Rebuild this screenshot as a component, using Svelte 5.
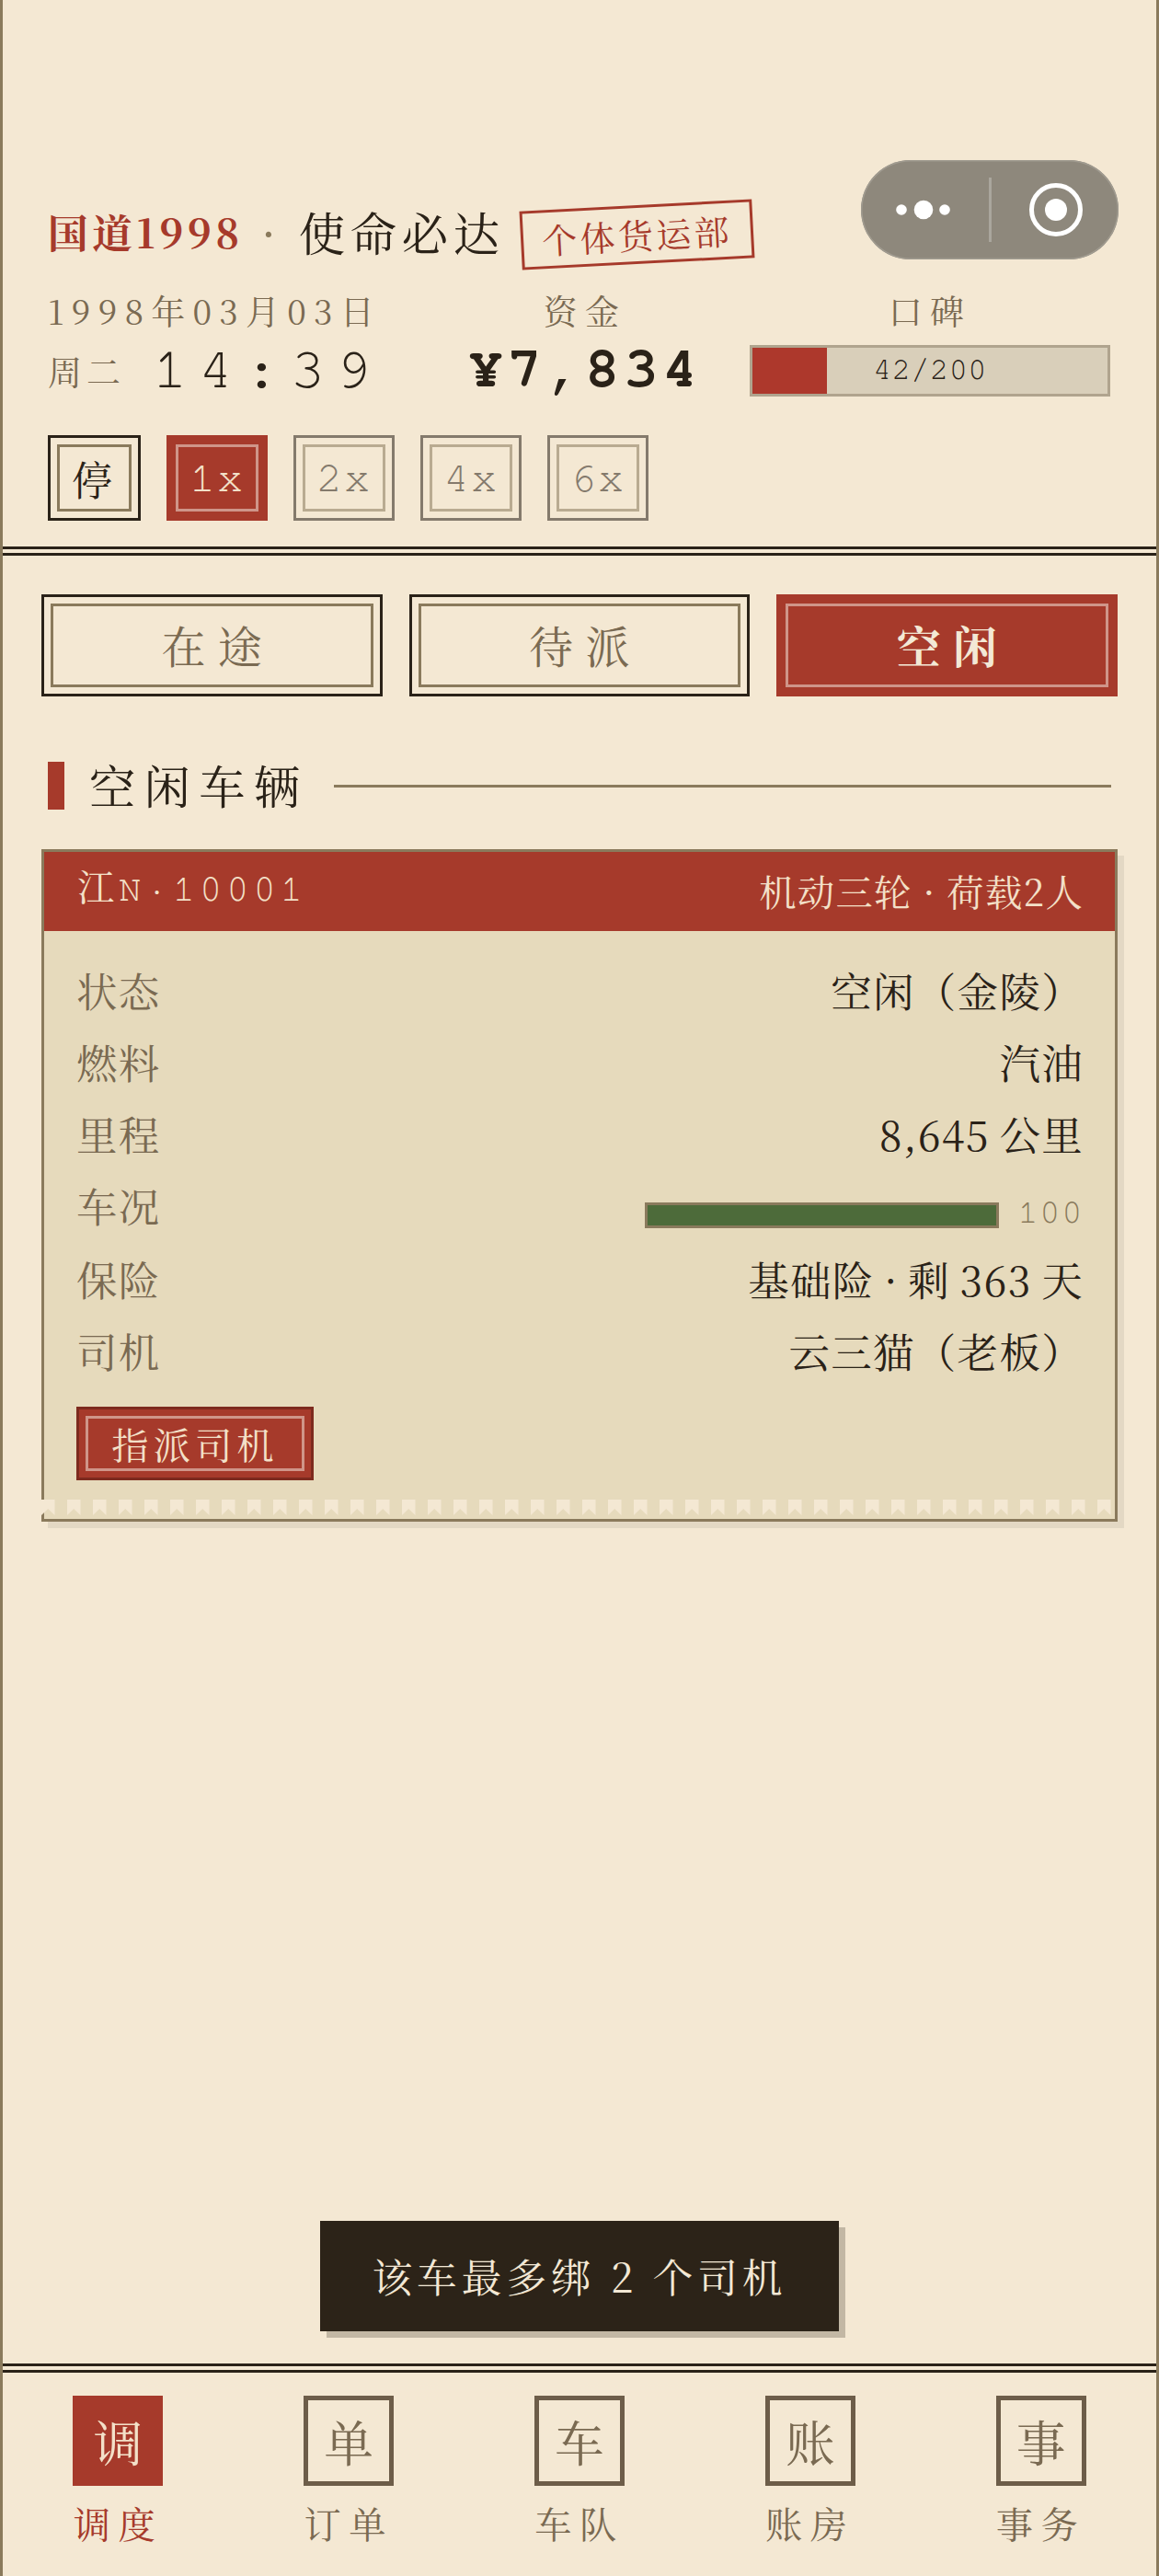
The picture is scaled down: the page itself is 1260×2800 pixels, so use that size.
<script>
  const speeds = [
    { label: '1x', on: true },
    { label: '2x' },
    { label: '4x' },
    { label: '6x' }
  ];
  const tabs = [
    { key: 'transit', label: '在途' },
    { key: 'pending', label: '待派' },
    { key: 'idle', label: '空闲', on: true }
  ];
  const rows = [
    { k: '状态', v: '空闲（金陵）' },
    { k: '燃料', v: '汽油' },
    { k: '里程', v: '8,645 公里' },
    { k: '车况', bar: 100 },
    { k: '保险', v: '基础险 · 剩 363 天' },
    { k: '司机', v: '云三猫（老板）' }
  ];
  const nav = [
    { icon: '调', label: '调度', on: true },
    { icon: '单', label: '订单' },
    { icon: '车', label: '车队' },
    { icon: '账', label: '账房' },
    { icon: '事', label: '事务' }
  ];
</script>

<div class="page">
  <header class="head">
    <div class="title">
      <span class="brand">国道1998</span>
      <span class="dot">·</span>
      <span class="slogan">使命必达</span>
      <span class="stamp">个体货运部</span>
    </div>
    <div class="stats">
      <div class="clock">
        <div class="date">1998年03月03日</div>
        <div class="timeline"><span class="week">周二</span><span class="time">14:39</span></div>
      </div>
      <div class="funds">
        <div class="cap">资金</div>
        <div class="money">¥7,834</div>
      </div>
      <div class="rep">
        <div class="cap">口碑</div>
        <div class="repbar">
          <div class="repfill" style="width:21%"></div>
          <span class="reptext">42/200</span>
        </div>
      </div>
    </div>
    <div class="speeds">
      <button class="speed pause"><span class="inner">停</span></button>
      {#each speeds as s}
        <button class="speed rate" class:on={s.on} class:off={!s.on}><span class="inner mono">{s.label}</span></button>
      {/each}
    </div>
  </header>

  <main class="main">
    <div class="tabs">
      {#each tabs as t}
        <button class="tab" class:on={t.on}><span class="tabinner">{t.label}</span></button>
      {/each}
    </div>

    <div class="section">
      <i class="mark"></i>
      <span class="sectitle">空闲车辆</span>
      <i class="rule"></i>
    </div>

    <article class="card">
      <div class="cardhead">
        <span class="plate">江N·10001</span>
        <span class="model">机动三轮 · 荷载2人</span>
      </div>
      <div class="cardbody">
        {#each rows as r}
          <div class="row" class:barrow={r.bar}>
            <span class="key">{r.k}</span>
            {#if r.bar}
              <span class="cond">
                <span class="condbar"><span class="condfill" style="width:{r.bar}%"></span></span>
                <span class="condnum">{r.bar}</span>
              </span>
            {:else}
              <span class="val">{r.v}</span>
            {/if}
          </div>
        {/each}
        <button class="assign"><span class="assigninner">指派司机</span></button>
      </div>
      <svg class="teeth" aria-hidden="true">
        <defs>
          <pattern id="flag" width="28" height="17" patternUnits="userSpaceOnUse">
            <path d="M0 0H14.5V17L7.2 10L0 17Z" fill="#f4e8d3" />
          </pattern>
        </defs>
        <rect width="100%" height="17" fill="url(#flag)" />
      </svg>
    </article>
  </main>

  <div class="toastwrap"><div class="toast">该车最多绑 2 个司机</div></div>

  <nav class="nav">
    {#each nav as n}
      <div class="navitem" class:on={n.on}>
        <span class="navicon">{n.icon}</span>
        <span class="navlabel">{n.label}</span>
      </div>
    {/each}
  </nav>

  <div class="capsule" aria-hidden="true">
    <svg width="280" height="108" viewBox="0 0 280 108">
      <circle cx="44" cy="54" r="5.8" fill="#fff" />
      <circle cx="68" cy="54" r="10.3" fill="#fff" />
      <circle cx="91" cy="54" r="5.8" fill="#fff" />
      <rect x="139" y="19" width="3" height="70" fill="#fff" opacity="0.25" />
      <circle cx="212" cy="54" r="26.5" fill="none" stroke="#fff" stroke-width="5" />
      <circle cx="212" cy="54" r="12" fill="#fff" />
    </svg>
  </div>
</div>

<style>
  :global(body) {
    margin: 0;
    background: #f4e8d3;
  }
  .page {
    position: relative;
    box-sizing: border-box;
    height: 2800px;
    display: flex;
    flex-direction: column;
    background: #f4e8d3;
    border-left: 3px solid #8a7a5c;
    border-right: 3px solid #8a7a5c;
    color: #2a2218;
    font-family: "Noto Serif CJK SC", "Liberation Serif", serif;
  }
  button {
    font-family: inherit;
    padding: 0;
    margin: 0;
    background: none;
  }
  .head {
    box-sizing: border-box;
    height: 604px;
    padding: 220px 49px 0;
    border-bottom: 10px double #2a2218;
  }
  .title {
    display: flex;
    align-items: center;
    height: 62px;
  }
  .brand {
    font-size: 43.68px;
    font-weight: 700;
    letter-spacing: 4.5px;
    color: #a63a2b;
  }
  .dot {
    width: 16px;
    margin: 0 25px 0 19px;
    text-align: center;
    font-size: 50px;
    color: #8a7a5c;
  }
  .slogan {
    font-size: 50.4px;
    letter-spacing: 5.6px;
  }
  .stamp {
    margin-left: 17px;
    padding: 6px 20px;
    border: 3px solid #a63a2b;
    color: #a63a2b;
    font-size: 38px;
    letter-spacing: 3.4px;
    line-height: 46px;
    transform: rotate(-3deg);
    margin-top: 8px;
  }
  .stats {
    display: flex;
    margin-top: 33px;
  }
  .clock {
    width: 405px;
  }
  .date {
    font-size: 36.96px;
    letter-spacing: 8.2px;
    line-height: 44px;
    color: #7a6a52;
  }
  .timeline {
    display: flex;
    align-items: center;
    height: 60px;
    margin-top: 14px;
  }
  .week {
    font-size: 36.96px;
    letter-spacing: 5.04px;
    color: #7a6a52;
    width: 114px;
  }
  .time {
    padding-bottom: 2px;
    font-family: "FreeMono", "Liberation Mono", monospace;
    font-size: 63px;
    letter-spacing: 12px;
  }
  .funds {
    width: 358px;
    text-align: center;
  }
  .cap {
    font-size: 36.96px;
    letter-spacing: 8.4px;
    line-height: 44px;
    color: #7a6a52;
    text-align: center;
  }
  .money {
    font-family: "FreeMono", "Liberation Mono", monospace;
    font-weight: 700;
    font-size: 62px;
    letter-spacing: 5px;
    line-height: 60px;
    margin-top: 12px;
  }
  .rep {
    width: 392px;
  }
  .repbar {
    position: relative;
    box-sizing: border-box;
    height: 56px;
    margin-top: 16px;
    padding-bottom: 3px;
    border: 3px solid #b0a48e;
    background: #d9cfba;
    display: flex;
    align-items: center;
    justify-content: center;
  }
  .repfill {
    position: absolute;
    left: 0;
    top: 0;
    bottom: 0;
    background: #ad382c;
  }
  .reptext {
    position: relative;
    font-family: "FreeMono", "Liberation Mono", monospace;
    font-size: 33.6px;
    letter-spacing: 0.5px;
    color: #2a2218;
  }
  .speeds {
    display: flex;
    gap: 28px;
    margin-top: 40px;
  }
  .speed {
    box-sizing: border-box;
    height: 93px;
    padding: 7px;
    border: 3px solid #2a2218;
    display: flex;
    color: #2a2218;
  }
  .rate {
    width: 110px;
  }
  .speed .inner {
    box-sizing: border-box;
    height: 100%;
    padding: 0 12px;
    border: 3.36px solid #8a7a5c;
    display: flex;
    align-items: center;
    justify-content: center;
    font-size: 47px;
    letter-spacing: 1.68px;
  }
  .speed .mono {
    font-family: "FreeMono", "Liberation Mono", monospace;
    flex: 1;
    padding: 0;
  }
  .pause .inner {
    font-size: 44px;
    letter-spacing: 5px;
    padding: 0 13px;
  }
  .speed.off {
    opacity: 0.55;
  }
  .speed.on {
    background: #a63a2b;
    border-color: #a63a2b;
    color: #f3e0c8;
  }
  .speed.on .inner {
    border-color: #cf9589;
  }
  .main {
    flex: 1;
    padding: 42px 42px 0;
  }
  .tabs {
    display: grid;
    grid-template-columns: repeat(3, 1fr);
    gap: 29px;
  }
  .tab {
    box-sizing: border-box;
    height: 111px;
    padding: 7px;
    border: 3px solid #2a2218;
    display: flex;
  }
  .tabinner {
    flex: 1;
    box-sizing: border-box;
    padding: 0 0 3px 13px;
    border: 3.36px solid #8a7a5c;
    display: flex;
    align-items: center;
    justify-content: center;
    font-size: 48px;
    letter-spacing: 13.44px;
    color: #7a6a52;
  }
  .tab.on {
    background: #a63a2b;
    border-color: #a63a2b;
  }
  .tab.on .tabinner {
    border-color: #cf9589;
    color: #f3e8d5;
    font-weight: 700;
  }
  .section {
    display: flex;
    align-items: center;
    height: 52px;
    margin: 71px 7px 0;
  }
  .mark {
    width: 18px;
    height: 52px;
    background: #a63a2b;
  }
  .sectitle {
    margin-left: 27px;
    padding-bottom: 4px;
    font-size: 50.4px;
    letter-spacing: 9.2px;
  }
  .rule {
    flex: 1;
    height: 3px;
    margin-left: 28px;
    background: #8a7a5c;
  }
  .card {
    position: relative;
    margin-top: 43px;
    border: 3px solid #8a7a5c;
    background: #e6dabc;
    box-shadow: 7px 7px 0 rgba(42, 34, 24, 0.08);
  }
  .cardhead {
    box-sizing: border-box;
    height: 86px;
    padding: 0 34px 0 36px;
    display: flex;
    align-items: center;
    justify-content: space-between;
    background: #a63a2b;
    color: #f3e0c8;
  }
  .plate {
    padding-bottom: 15px;
    font-family: "FreeMono", "Noto Serif CJK SC", "Liberation Mono", monospace;
    font-size: 40.32px;
    letter-spacing: 5.04px;
  }
  .model {
    padding-bottom: 3px;
    font-size: 40.32px;
    letter-spacing: 1.3px;
  }
  .cardbody {
    padding: 25px 34px 42px 35px;
  }
  .row {
    display: flex;
    justify-content: space-between;
    align-items: center;
    height: 78px;
    font-size: 44.5px;
    letter-spacing: 1.3px;
    word-spacing: -2.3px;
  }
  .barrow {
    height: 80px;
    align-items: flex-start;
  }
  .barrow .key {
    margin-top: 7px;
  }
  .key {
    color: #7a6a52;
  }
  .cond {
    display: flex;
    align-items: center;
    gap: 20px;
    margin-top: 28px;
    letter-spacing: 0;
  }
  .condbar {
    display: block;
    box-sizing: border-box;
    width: 385px;
    height: 28px;
    border: 3px solid #8a7a5c;
    background: #d9cfba;
  }
  .condfill {
    display: block;
    height: 100%;
    background: #4d6b3a;
  }
  .condnum {
    padding-bottom: 6px;
    font-family: "FreeMono", "Liberation Mono", monospace;
    font-size: 36.96px;
    letter-spacing: 1.68px;
    color: #8a7a5c;
  }
  .assign {
    display: flex;
    box-sizing: border-box;
    width: 258px;
    height: 80px;
    padding: 7px;
    margin-top: 22px;
    border: 3px solid #7d2a1e;
    background: #a63a2b;
  }
  .assigninner {
    flex: 1;
    box-sizing: border-box;
    border: 3px solid #cf9589;
    display: flex;
    align-items: center;
    justify-content: center;
    font-size: 40.32px;
    letter-spacing: 5px;
    color: #f3e0c8;
  }
  .teeth {
    position: absolute;
    left: -3px;
    bottom: 4px;
    width: calc(100% + 6px);
    height: 17px;
  }
  .toastwrap {
    display: flex;
    justify-content: center;
    margin-bottom: 35px;
  }
  .toast {
    box-sizing: border-box;
    height: 120px;
    width: 564px;
    padding-bottom: 2px;
    display: flex;
    align-items: center;
    justify-content: center;
    background: #2c2318;
    color: #f3e8d5;
    font-size: 43.68px;
    letter-spacing: 5px;
    box-shadow: 7px 7px 0 rgba(42, 34, 24, 0.25);
  }
  .nav {
    box-sizing: border-box;
    height: 231px;
    display: flex;
    border-top: 10px double #2a2218;
    padding-top: 25px;
  }
  .navitem {
    flex: 1;
    display: flex;
    flex-direction: column;
    align-items: center;
  }
  .navicon {
    box-sizing: border-box;
    width: 98px;
    height: 98px;
    padding-bottom: 2px;
    display: flex;
    align-items: center;
    justify-content: center;
    border: 5px solid #6d5d49;
    color: #7a6a52;
    font-size: 53.76px;
  }
  .navlabel {
    margin-top: 11px;
    font-size: 40.32px;
    letter-spacing: 8.4px;
    color: #7a6a52;
  }
  .on .navicon {
    background: #a63a2b;
    border-color: #a63a2b;
    color: #f3e0c8;
  }
  .on .navlabel {
    color: #a63a2b;
  }
  .capsule {
    position: absolute;
    left: 933px;
    top: 174px;
    width: 280px;
    height: 108px;
    border-radius: 54px;
    background: #8e887c;
    box-shadow: inset 0 0 0 1.5px #a09b90;
    line-height: 0;
  }
</style>
